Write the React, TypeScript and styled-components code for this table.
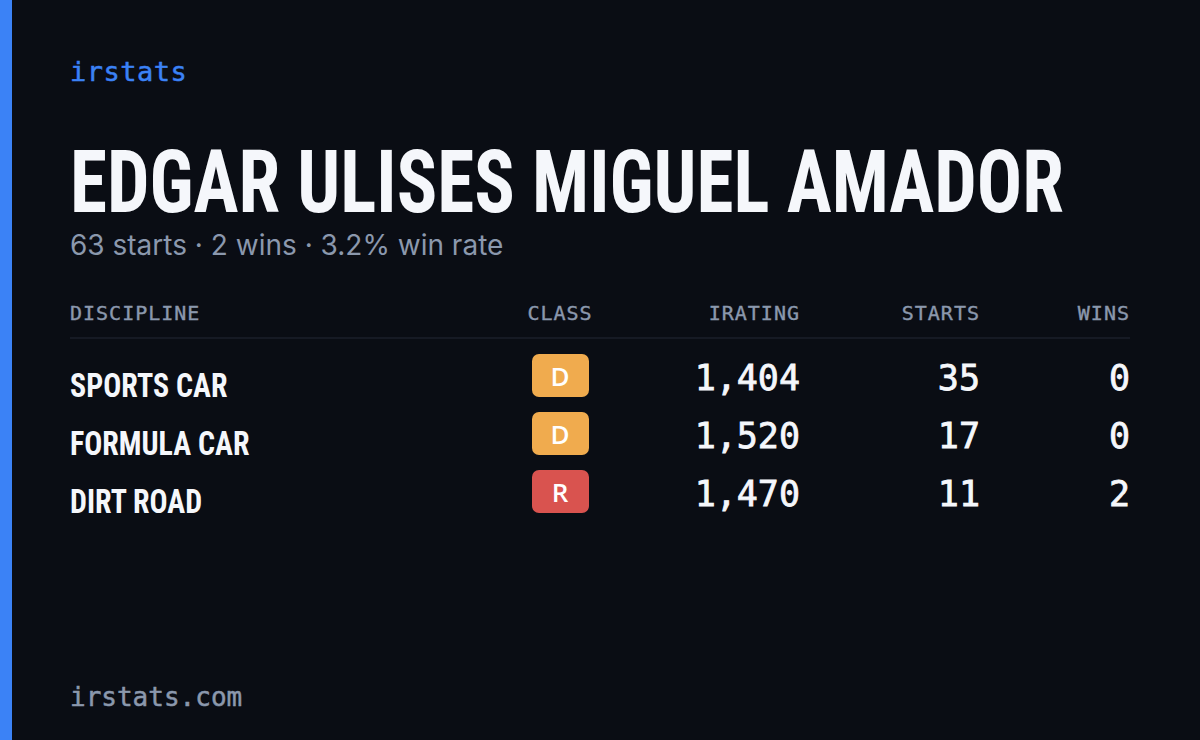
import React from "react";
import styled, { createGlobalStyle } from "styled-components";

const Global = createGlobalStyle`
  html, body { margin: 0; padding: 0; background: #0a0d14; }
  * { box-sizing: border-box; }
`;

const Page = styled.div`
  width: 1200px;
  height: 740px;
  background: #0a0d14;
  border-left: 12px solid #3b82f6;
  padding: 0 70px 0 58px;
  display: flex;
  flex-direction: column;
  overflow: hidden;
`;

const Logo = styled.div`
  margin-top: 56px;
  font-family: "DejaVu Sans Mono", monospace;
  font-size: 27px;
  line-height: 32px;
  color: #3b82f6;
  letter-spacing: 0.5px;
  -webkit-text-stroke: 0.5px currentColor;
`;

const Title = styled.h1`
  margin: 54px 0 0;
  font-family: "Liberation Sans Narrow", "Roboto Condensed", sans-serif;
  font-weight: 700;
  font-size: 88px;
  line-height: 80px;
  color: #f5f7fb;
  white-space: nowrap;
  transform: scaleX(0.855);
  transform-origin: left center;
`;

const Sub = styled.div`
  font-family: Inter, sans-serif;
  font-size: 28px;
  line-height: 34px;
  color: #8b98ad;
  margin-top: 6px;
`;

const Grid = styled.div`
  margin-top: 39px;
  display: grid;
  grid-template-columns: 430px 120px 180px 180px 150px;
`;

const Head = styled.div<{ $align: string }>`
  font-family: "DejaVu Sans Mono", monospace;
  font-size: 20px;
  letter-spacing: 1px;
  color: #8b98ad;
  text-align: ${(p) => p.$align};
  padding-bottom: 12px;
  border-bottom: 2px solid #161a24;
  margin-bottom: 15px;
  line-height: 24px;
  -webkit-text-stroke: 0.4px currentColor;
`;

const Cell = styled.div<{ $align: string }>`
  height: 58px;
  display: flex;
  align-items: flex-start;
  justify-content: ${(p) => p.$align};
`;

const Name = styled.div`
  font-family: "Liberation Sans Narrow", "Roboto Condensed", sans-serif;
  font-weight: 700;
  font-size: 34px;
  line-height: 40px;
  padding-top: 11px;
  color: #f5f7fb;
  white-space: nowrap;
  transform: scaleX(0.88);
  transform-origin: left center;
`;

const Badge = styled.div<{ $bg: string }>`
  width: 57px;
  height: 43px;
  border-radius: 7px;
  background: ${(p) => p.$bg};
  color: #fff;
  font-family: "Open Sans", sans-serif;
  font-weight: 600;
  font-size: 26px;
  display: flex;
  align-items: center;
  justify-content: center;
`;

const Num = styled.div`
  font-family: "DejaVu Sans Mono", monospace;
  font-size: 35px;
  line-height: 44px;
  padding-top: 2px;
  color: #f5f7fb;
  -webkit-text-stroke: 0.8px currentColor;
`;

const Spacer = styled.div`
  flex: 1;
`;

const Footer = styled.div`
  font-family: "DejaVu Sans Mono", monospace;
  font-size: 26px;
  line-height: 30px;
  color: #8b98ad;
  margin-bottom: 28px;
  -webkit-text-stroke: 0.5px currentColor;
`;

const rows = [
  { name: "SPORTS CAR", cls: "D", color: "#f0ab4e", ir: "1,404", starts: "35", wins: "0" },
  { name: "FORMULA CAR", cls: "D", color: "#f0ab4e", ir: "1,520", starts: "17", wins: "0" },
  { name: "DIRT ROAD", cls: "R", color: "#d9534f", ir: "1,470", starts: "11", wins: "2" },
];

export default function App() {
  return (
    <>
      <Global />
      <Page>
        <Logo>irstats</Logo>
        <Title>EDGAR ULISES MIGUEL AMADOR</Title>
        <Sub>63 starts · 2 wins · 3.2% win rate</Sub>
        <Grid>
          <Head $align="left">DISCIPLINE</Head>
          <Head $align="center">CLASS</Head>
          <Head $align="right">IRATING</Head>
          <Head $align="right">STARTS</Head>
          <Head $align="right">WINS</Head>
          {rows.map((r) => (
            <React.Fragment key={r.name}>
              <Cell $align="flex-start"><Name>{r.name}</Name></Cell>
              <Cell $align="center"><Badge $bg={r.color}>{r.cls}</Badge></Cell>
              <Cell $align="flex-end"><Num>{r.ir}</Num></Cell>
              <Cell $align="flex-end"><Num>{r.starts}</Num></Cell>
              <Cell $align="flex-end"><Num>{r.wins}</Num></Cell>
            </React.Fragment>
          ))}
        </Grid>
        <Spacer />
        <Footer>irstats.com</Footer>
      </Page>
    </>
  );
}
